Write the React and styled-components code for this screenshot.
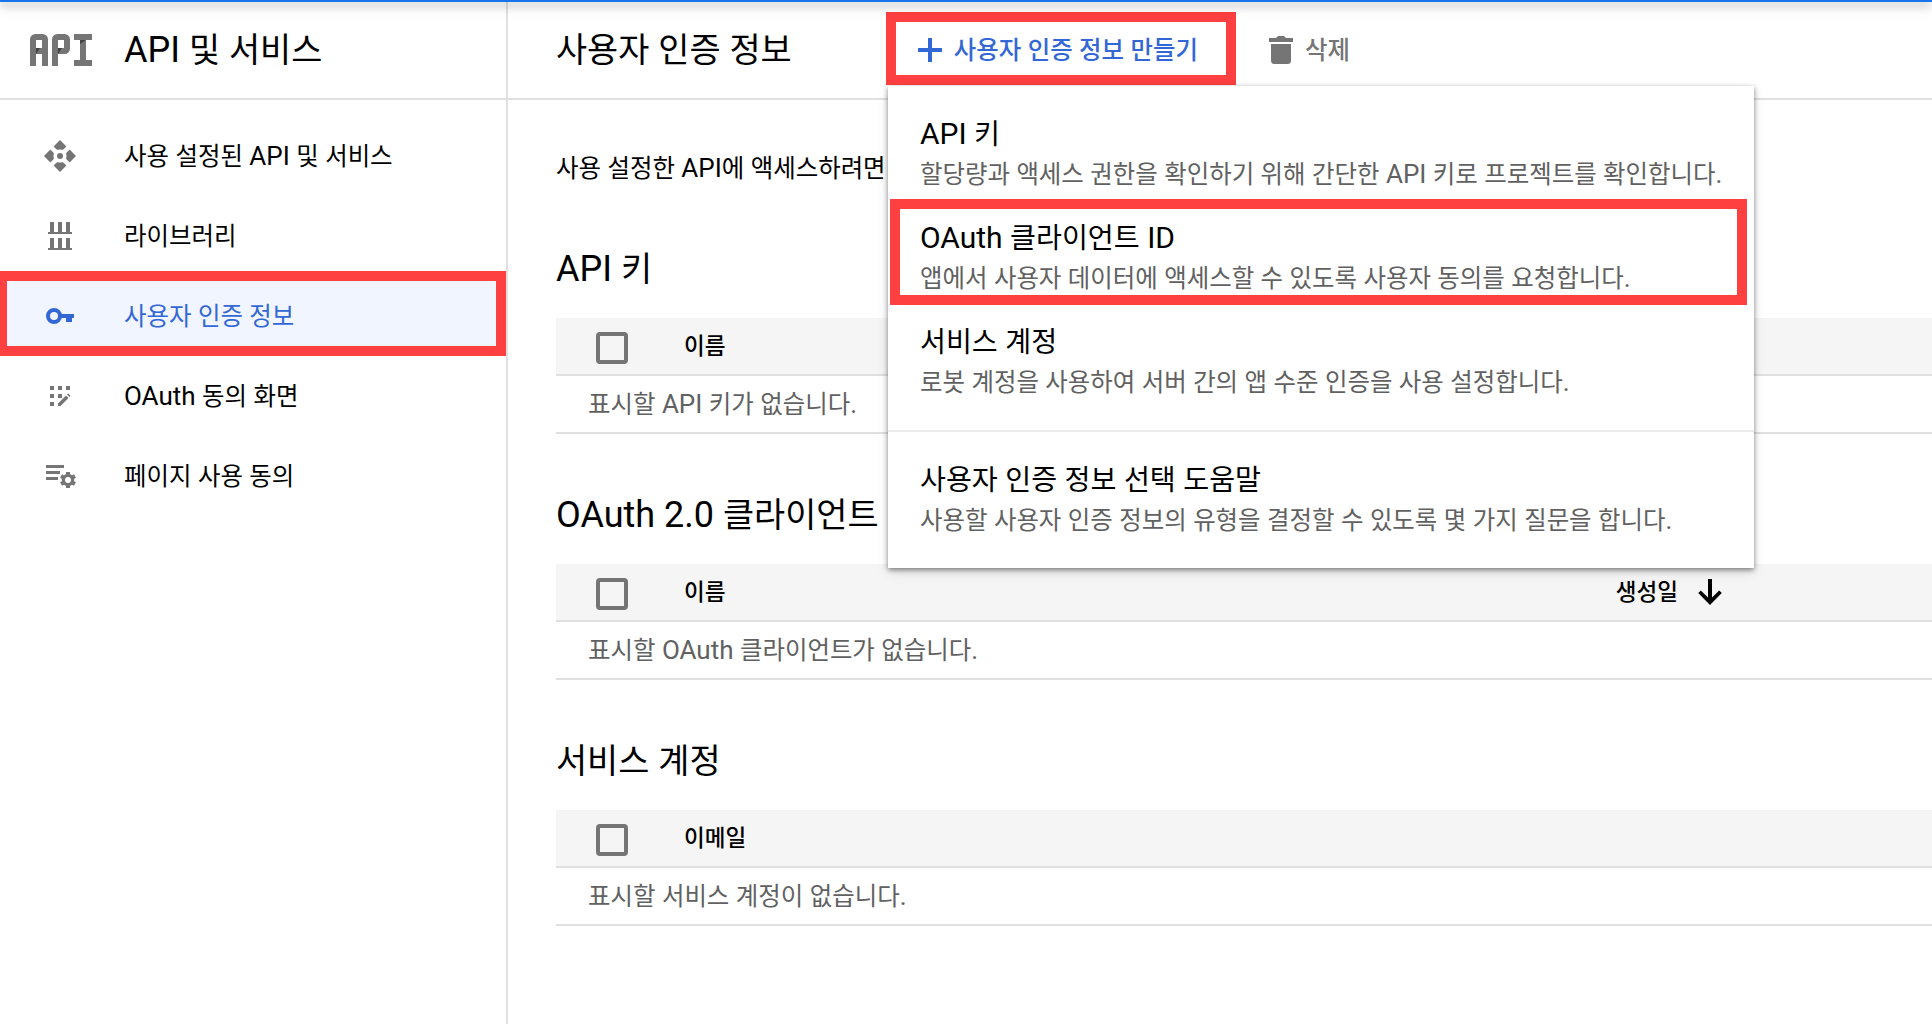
import React from 'react';
import styled, { createGlobalStyle } from 'styled-components';

const GlobalStyle = createGlobalStyle`
  *, *::before, *::after { box-sizing: border-box; }
  body {
    margin: 0;
    background: #fff;
    color: #000;
    font-family: Roboto, "Noto Sans CJK KR", sans-serif;
    overflow: hidden;
  }
`;

/* ---------- text ---------- */

const HangulRun = styled.span`
  font-family: "Noto Sans CJK KR", sans-serif;
  font-size: 0.94em;
  line-height: 1;
`;

// Hangul is set slightly smaller than the Latin letters beside it.
function Text({ children }) {
  return children
    .split(/([가-힣]+)/)
    .filter(Boolean)
    .map((run, i) =>
      /[가-힣]/.test(run) ? <HangulRun key={i}>{run}</HangulRun> : run
    );
}

/* ---------- layout ---------- */

const Page = styled.div`
  position: relative;
  display: flex;
  width: 1932px;
  height: 1024px;
  overflow: hidden;
`;

const TopBar = styled.div`
  position: absolute;
  inset: 0 0 auto 0;
  z-index: 1;
  height: 2px;
  background: #1a73e8;
  box-shadow: 0 3px 8px rgba(0, 0, 0, 0.5), 0 6px 16px rgba(0, 0, 0, 0.14);
`;

const Sidebar = styled.aside`
  flex: none;
  width: 508px;
  border-right: 2px solid #e0e0e0;
`;

const Main = styled.main`
  flex: 1;
  min-width: 0;
`;

const Header = styled.header`
  display: flex;
  align-items: center;
  height: 100px;
  padding-top: 2px;
  padding-left: ${(p) => p.$inset}px;
  border-bottom: 2px solid #e0e0e0;
`;

const Title = styled.h1`
  margin: 0;
  font-size: 36px;
  font-weight: 400;
  line-height: 48px;
  white-space: nowrap;
`;

const ProductTitle = styled(Title)`
  margin-left: 32px;
`;

const Icon = styled.svg`
  display: block;
  flex: none;
  fill: currentColor;
`;

/* ---------- sidebar ---------- */

const Nav = styled.nav`
  display: flex;
  flex-direction: column;
  padding-top: 16px;
`;

const NavItem = styled.a`
  position: relative;
  display: flex;
  align-items: center;
  gap: 48px;
  height: 80px;
  padding-left: 44px;
  font-size: 26px;
  line-height: 36px;
  color: ${(p) => (p.$active ? '#3367d6' : '#000')};
  background: ${(p) => (p.$active ? '#f0f5ff' : 'transparent')};
`;

const NavLabel = styled.span`
  padding-bottom: 1px;
`;

const NavIcon = styled(Icon)`
  color: ${(p) => (p.$active ? '#3367d6' : '#757575')};
`;

const Highlight = styled.span`
  position: absolute;
  border: 10px solid #ff4040;
  pointer-events: none;
`;

const NavHighlight = styled(Highlight)`
  inset: -5px 0 0 -3px;
`;

/* ---------- toolbar ---------- */

const Actions = styled.div`
  display: flex;
  align-self: flex-start;
  gap: 71px;
  margin-left: 126px;
  padding-top: 10px;
`;

const Action = styled.button`
  position: relative;
  display: flex;
  align-items: center;
  gap: 12px;
  height: 73px;
  padding: 3px 0 0;
  border: 0;
  background: none;
  font: 500 26px/36px Roboto, "Noto Sans CJK KR", sans-serif;
  color: ${(p) => (p.$primary ? '#3367d6' : '#757575')};
  white-space: nowrap;
`;

const ActionHighlight = styled(Highlight)`
  inset: 0 -38px 0 -32px;
`;

/* ---------- menu ---------- */

const Menu = styled.div`
  position: absolute;
  z-index: 2;
  top: 86px;
  left: 888px;
  width: 866px;
  background: #fff;
  box-shadow: 0 2px 5px rgba(0, 0, 0, 0.45), 0 4px 12px rgba(0, 0, 0, 0.1);
`;

const MenuGroup = styled.div`
  padding: 16px 0;
  & + & { border-top: 2px solid #ebebeb; }
`;

const MenuItem = styled.div`
  position: relative;
  display: flex;
  flex-direction: column;
  height: 104px;
  padding: 12px 32px;
`;

const MenuTitle = styled.div`
  font-size: 30px;
  line-height: 40px;
`;

const MenuDescription = styled.div`
  font-size: 26px;
  line-height: 40px;
  color: #616161;
  white-space: nowrap;
`;

const MenuHighlight = styled(Highlight)`
  inset: -7px 7px 5px 2px;
`;

/* ---------- content ---------- */

const Content = styled.div`
  padding: 50px 0 0 48px;
`;

const Intro = styled.p`
  margin: 0 0 36px;
  font-size: 26px;
  line-height: 36px;
`;

const Section = styled.section`
  height: 246px;
`;

const SectionTitle = styled.h2`
  margin: 0;
  padding-top: 23px;
  height: 96px;
  font-size: 36px;
  font-weight: 400;
  line-height: 48px;
`;

const TableHead = styled.div`
  display: flex;
  align-items: center;
  height: 58px;
  padding-left: 40px;
  background: #f5f5f5;
  border-bottom: 2px solid #e0e0e0;
  font-size: 24px;
  font-weight: 500;
  line-height: 36px;
`;

const Checkbox = styled.span`
  width: 32px;
  height: 32px;
  margin: 4px 56px 0 0;
  border: 4px solid #757575;
  border-radius: 4px;
`;

const SortColumn = styled.span`
  display: flex;
  align-items: center;
  gap: 20px;
  margin-left: auto;
  padding-right: 210px;
`;

const EmptyRow = styled.div`
  height: 58px;
  padding-left: 32px;
  border-bottom: 2px solid #e0e0e0;
  font-size: 26px;
  line-height: 56px;
  color: #616161;
`;

/* ---------- icons ---------- */

const LogoIcon = styled(Icon)`
  color: #757575;
`;

const ProductLogo = () => (
  <LogoIcon width="62" height="32" viewBox="0 0 62 32">
    <g fill="none" stroke="currentColor" strokeWidth="6">
      <rect x="3" y="3" width="12" height="14" rx="2.5" />
      <rect x="25" y="3" width="12" height="14" rx="2.5" />
    </g>
    <rect y="14" width="6" height="18" />
    <rect x="12" y="14" width="6" height="18" />
    <rect x="22" y="14" width="6" height="18" />
    <rect x="44" width="18" height="6" />
    <rect x="50" width="6" height="32" />
    <rect x="44" y="26" width="18" height="6" />
    <g fill="#424242">
      <polygon points="6,14 10,14 6,20" />
      <polygon points="28,14 32,14 28,20" />
      <polygon points="50,6 56,6 50,10" />
    </g>
  </LogoIcon>
);

const petal = 'M16 0 22.4 6.4 19 9.8 18 9.8A6.6 6.6 0 0 0 14 9.8L13 9.8 9.6 6.4Z';

const glyphs = {
  api: (
    <>
      {[0, 90, 180, 270].map((a) => (
        <path key={a} d={petal} transform={`rotate(${a} 16 16)`} />
      ))}
      <circle cx="16" cy="16" r="3" />
    </>
  ),
  library: (
    <>
      {[2, 18].map((y) =>
        [6, 14, 22].map((x) => <rect key={`${x}-${y}`} x={x} y={y} width="4" height="11" />)
      )}
      <rect x="4" y="12" width="24" height="2" />
      <rect x="4" y="28" width="24" height="2" />
    </>
  ),
  key: (
    <>
      <circle cx="10" cy="16" r="6" fill="none" stroke="currentColor" strokeWidth="4" />
      <path d="M16 14H30V18H28V22H22V18H16Z" />
    </>
  ),
  consent: (
    <>
      {[[6, 6], [14, 6], [22, 6], [6, 14], [14, 14], [6, 22]].map(([x, y]) => (
        <rect key={`${x}-${y}`} x={x} y={y} width="4" height="4" />
      ))}
      <path d="M14 23.500 22 15.500 24.500 18 16.500 26H14ZM23 14.600 24.200 13.500 26.500 15.800 25.400 17Z" />
    </>
  ),
  settings: (
    <>
      <rect x="2" y="5" width="18" height="3" />
      <rect x="2" y="11" width="14" height="3" />
      <rect x="2" y="17" width="12" height="3" />
      <circle cx="24" cy="20" r="4.6" fill="none" stroke="currentColor" strokeWidth="3.2" />
      {[0, 60, 120, 180, 240, 300].map((a) => (
        <rect key={a} x="22" y="12" width="4" height="3.4" transform={`rotate(${a} 24 20)`} />
      ))}
    </>
  ),
};

const PlusIcon = () => (
  <Icon width="24" height="24" viewBox="0 0 24 24">
    <path d="M10 0h4v10h10v4H14v10h-4V14H0v-4h10z" />
  </Icon>
);

const TrashIcon = () => (
  <Icon width="24" height="28" viewBox="0 0 24 28">
    <path d="M7 2 9 0h6l2 2h7v4H0V2zM2 8h20v16.5a3.5 3.5 0 0 1-3.5 3.5h-13A3.5 3.5 0 0 1 2 24.500z" />
  </Icon>
);

const ArrowDownIcon = () => (
  <Icon width="24" height="28" viewBox="0 0 24 28">
    <path d="M10 1h4v18.500l7.200-7.100 2.600 2.600L12 27 .2 15l2.600-2.600 7.200 7.100z" />
  </Icon>
);

/* ---------- data ---------- */

const navItems = [
  { icon: 'api', label: '사용 설정된 API 및 서비스' },
  { icon: 'library', label: '라이브러리' },
  { icon: 'key', label: '사용자 인증 정보', active: true },
  { icon: 'consent', label: 'OAuth 동의 화면' },
  { icon: 'settings', label: '페이지 사용 동의' },
];

const menuGroups = [
  [
    { title: 'API 키', text: '할당량과 액세스 권한을 확인하기 위해 간단한 API 키로 프로젝트를 확인합니다.' },
    { title: 'OAuth 클라이언트 ID', text: '앱에서 사용자 데이터에 액세스할 수 있도록 사용자 동의를 요청합니다.', marked: true },
    { title: '서비스 계정', text: '로봇 계정을 사용하여 서버 간의 앱 수준 인증을 사용 설정합니다.' },
  ],
  [
    { title: '사용자 인증 정보 선택 도움말', text: '사용할 사용자 인증 정보의 유형을 결정할 수 있도록 몇 가지 질문을 합니다.' },
  ],
];

const sections = [
  { title: 'API 키', column: '이름', empty: '표시할 API 키가 없습니다.' },
  { title: 'OAuth 2.0 클라이언트', column: '이름', sort: '생성일', empty: '표시할 OAuth 클라이언트가 없습니다.' },
  { title: '서비스 계정', column: '이메일', empty: '표시할 서비스 계정이 없습니다.' },
];

export default function App() {
  return (
    <Page>
      <GlobalStyle />
      <TopBar />
      <Sidebar>
        <Header $inset={30}>
          <ProductLogo />
          <ProductTitle as="div"><Text>API 및 서비스</Text></ProductTitle>
        </Header>
        <Nav>
          {navItems.map(({ icon, label, active }) => (
            <NavItem key={label} $active={active}>
              <NavIcon $active={active} width="32" height="32" viewBox="0 0 32 32">
                {glyphs[icon]}
              </NavIcon>
              <NavLabel><Text>{label}</Text></NavLabel>
              {active && <NavHighlight />}
            </NavItem>
          ))}
        </Nav>
      </Sidebar>
      <Main>
        <Header $inset={48}>
          <Title><Text>사용자 인증 정보</Text></Title>
          <Actions>
            <Action $primary>
              <PlusIcon />
              <span><Text>사용자 인증 정보 만들기</Text></span>
              <ActionHighlight />
            </Action>
            <Action>
              <TrashIcon />
              <span><Text>삭제</Text></span>
            </Action>
          </Actions>
        </Header>
        <Content>
          <Intro><Text>사용 설정한 API에 액세스하려면</Text></Intro>
          {sections.map((s) => (
            <Section key={s.title}>
              <SectionTitle><Text>{s.title}</Text></SectionTitle>
              <TableHead>
                <Checkbox />
                <span><Text>{s.column}</Text></span>
                {s.sort && (
                  <SortColumn>
                    <span><Text>{s.sort}</Text></span>
                    <ArrowDownIcon />
                  </SortColumn>
                )}
              </TableHead>
              <EmptyRow><Text>{s.empty}</Text></EmptyRow>
            </Section>
          ))}
        </Content>
      </Main>
      <Menu>
        {menuGroups.map((group, i) => (
          <MenuGroup key={i}>
            {group.map((item) => (
              <MenuItem key={item.title}>
                <MenuTitle><Text>{item.title}</Text></MenuTitle>
                <MenuDescription><Text>{item.text}</Text></MenuDescription>
                {item.marked && <MenuHighlight />}
              </MenuItem>
            ))}
          </MenuGroup>
        ))}
      </Menu>
    </Page>
  );
}
